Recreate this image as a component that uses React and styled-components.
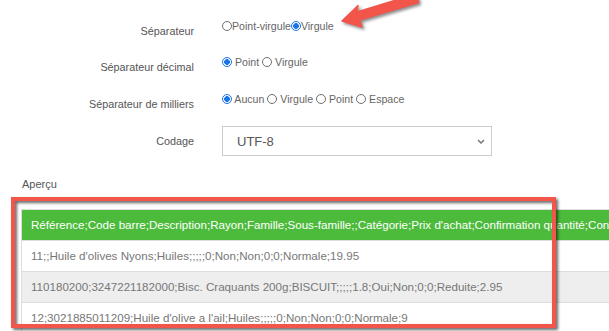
import styled, { createGlobalStyle } from "styled-components";

const GlobalStyle = createGlobalStyle`
  html, body {
    margin: 0;
    padding: 0;
    background: #fff;
    overflow: hidden;
  }
  body {
    font-family: "Liberation Sans", Arial, sans-serif;
  }
`;

const fields = [
  {
    label: "Séparateur",
    tight: true,
    options: [
      { text: "Point-virgule", checked: false },
      { text: "Virgule", checked: true },
    ],
  },
  {
    label: "Séparateur décimal",
    options: [
      { text: "Point", checked: true },
      { text: "Virgule", checked: false },
    ],
  },
  {
    label: "Séparateur de milliers",
    options: [
      { text: "Aucun", checked: true },
      { text: "Virgule", checked: false },
      { text: "Point", checked: false },
      { text: "Espace", checked: false },
    ],
  },
];

const header =
  "Référence;Code barre;Description;Rayon;Famille;Sous-famille;;Catégorie;Prix d'achat;Confirmation quantité;Conditionnement;Prix de vente";

const rows = [
  "11;;Huile d'olives Nyons;Huiles;;;;;0;Non;Non;0;0;Normale;19.95",
  "110180200;3247221182000;Bisc. Craquants 200g;BISCUIT;;;;;1.8;Oui;Non;0;0;Reduite;2.95",
  "12;3021885011209;Huile d'olive a l'ail;Huiles;;;;;0;Non;Non;0;0;Normale;9",
];

export default function App() {
  return (
    <Page>
      <GlobalStyle />
      <Form>
        {fields.map((f, i) => (
          <FieldRow key={f.label} $h={i === 2 ? 35 : 36.5}>
            <Label>{f.label}</Label>
            <Options>
              {f.options.map((o, j) => (
                <Option key={o.text}>
                  {j > 0 && !f.tight ? " " : ""}
                  <Radio type="radio" checked={o.checked} readOnly name={f.label} />
                  {f.tight ? "" : " "}
                  {o.text}
                </Option>
              ))}
            </Options>
          </FieldRow>
        ))}
        <SelectRow>
          <Label $center>Codage</Label>
          <Select>
            <span>UTF-8</span>
            <svg width="8" height="5" viewBox="0 0 8 5">
              <path d="M1 1l3 3 3-3" fill="none" stroke="#777" strokeWidth="1.5" />
            </svg>
          </Select>
        </SelectRow>
      </Form>

      <Preview>
        <PreviewTitle>Aperçu</PreviewTitle>
        <Table>
          <HeadRow>{header}</HeadRow>
          {rows.map((r, i) => (
            <DataRow key={i} $alt={i % 2 === 1}>
              {r}
            </DataRow>
          ))}
        </Table>
      </Preview>

      <Highlight />
      <Arrow width="90" height="34" viewBox="0 0 90 34">
        <polygon
          points="0,21 16,5.5 15,12 74,-6 76.5,2.5 17.5,20 20,27"
          fill="#f2554a"
          stroke="#f2554a"
          strokeWidth="1.5"
          strokeLinejoin="round"
        />
      </Arrow>
    </Page>
  );
}

const Page = styled.div`
  position: relative;
  width: 609px;
  height: 331px;
  overflow: hidden;
  color: #555;
`;

const Form = styled.div`
  padding-top: 18px;
`;

const FieldRow = styled.div`
  display: grid;
  grid-template-columns: 194px 1fr;
  column-gap: 28px;
  height: ${(p) => p.$h}px;
  align-items: start;
`;

const Label = styled.div`
  text-align: right;
  font-size: 10.8px;
  line-height: 13px;
  color: #555;
  padding-top: ${(p) => (p.$center ? 0 : 6.5)}px;
`;

const Options = styled.div`
  font-size: 10.6px;
  line-height: 13px;
  color: #666;
  padding-top: 1.5px;
  white-space: pre;
`;

const Option = styled.span`
  white-space: pre;
`;

const Radio = styled.input`
  appearance: none;
  width: 10px;
  height: 10px;
  margin: 0;
  box-sizing: border-box;
  border-radius: 50%;
  vertical-align: -1px;
  border: 1px solid ${(p) => (p.checked ? "#1a73e8" : "#6f6f6f")};
  background: ${(p) =>
    p.checked
      ? "radial-gradient(circle, #1a73e8 0 2.6px, #fff 3.1px)"
      : "#fff"};
`;

const SelectRow = styled.div`
  display: grid;
  grid-template-columns: 194px 270px;
  column-gap: 28px;
  align-items: center;
  height: 30px;
`;

const Select = styled.div`
  box-sizing: border-box;
  height: 30px;
  border: 1px solid #ccc;
  display: flex;
  align-items: center;
  justify-content: space-between;
  padding: 0 6px 0 14px;
  font-size: 13px;
  color: #555;
`;

const Preview = styled.div`
  padding-top: 21.5px;
`;

const PreviewTitle = styled.div`
  margin-left: 22px;
  font-size: 11px;
  line-height: 13px;
  color: #555;
`;

const Table = styled.div`
  margin: 18.5px 0 0 21px;
  width: 900px;
  border: 1px solid #ddd;
  white-space: nowrap;
`;

const HeadRow = styled.div`
  height: 30px;
  line-height: 30px;
  background: #4cbb3c;
  color: #fff;
  font-size: 11.6px;
  padding-left: 9px;
`;

const DataRow = styled.div`
  height: 30px;
  line-height: 30px;
  border-top: 1px solid #ddd;
  background: ${(p) => (p.$alt ? "#eeeeee" : "#fff")};
  color: #777;
  font-size: 11.6px;
  padding-left: 9px;
`;

const Highlight = styled.div`
  position: absolute;
  left: 11px;
  top: 197px;
  width: 545px;
  height: 131px;
  box-sizing: border-box;
  border: 4.5px solid #f2554a;
  filter: drop-shadow(2px 2px 1.5px rgba(0, 0, 0, 0.6));
`;

const Arrow = styled.svg`
  position: absolute;
  left: 342px;
  top: 0;
  overflow: visible;
  filter: drop-shadow(2px 2px 1.5px rgba(0, 0, 0, 0.45));
`;
